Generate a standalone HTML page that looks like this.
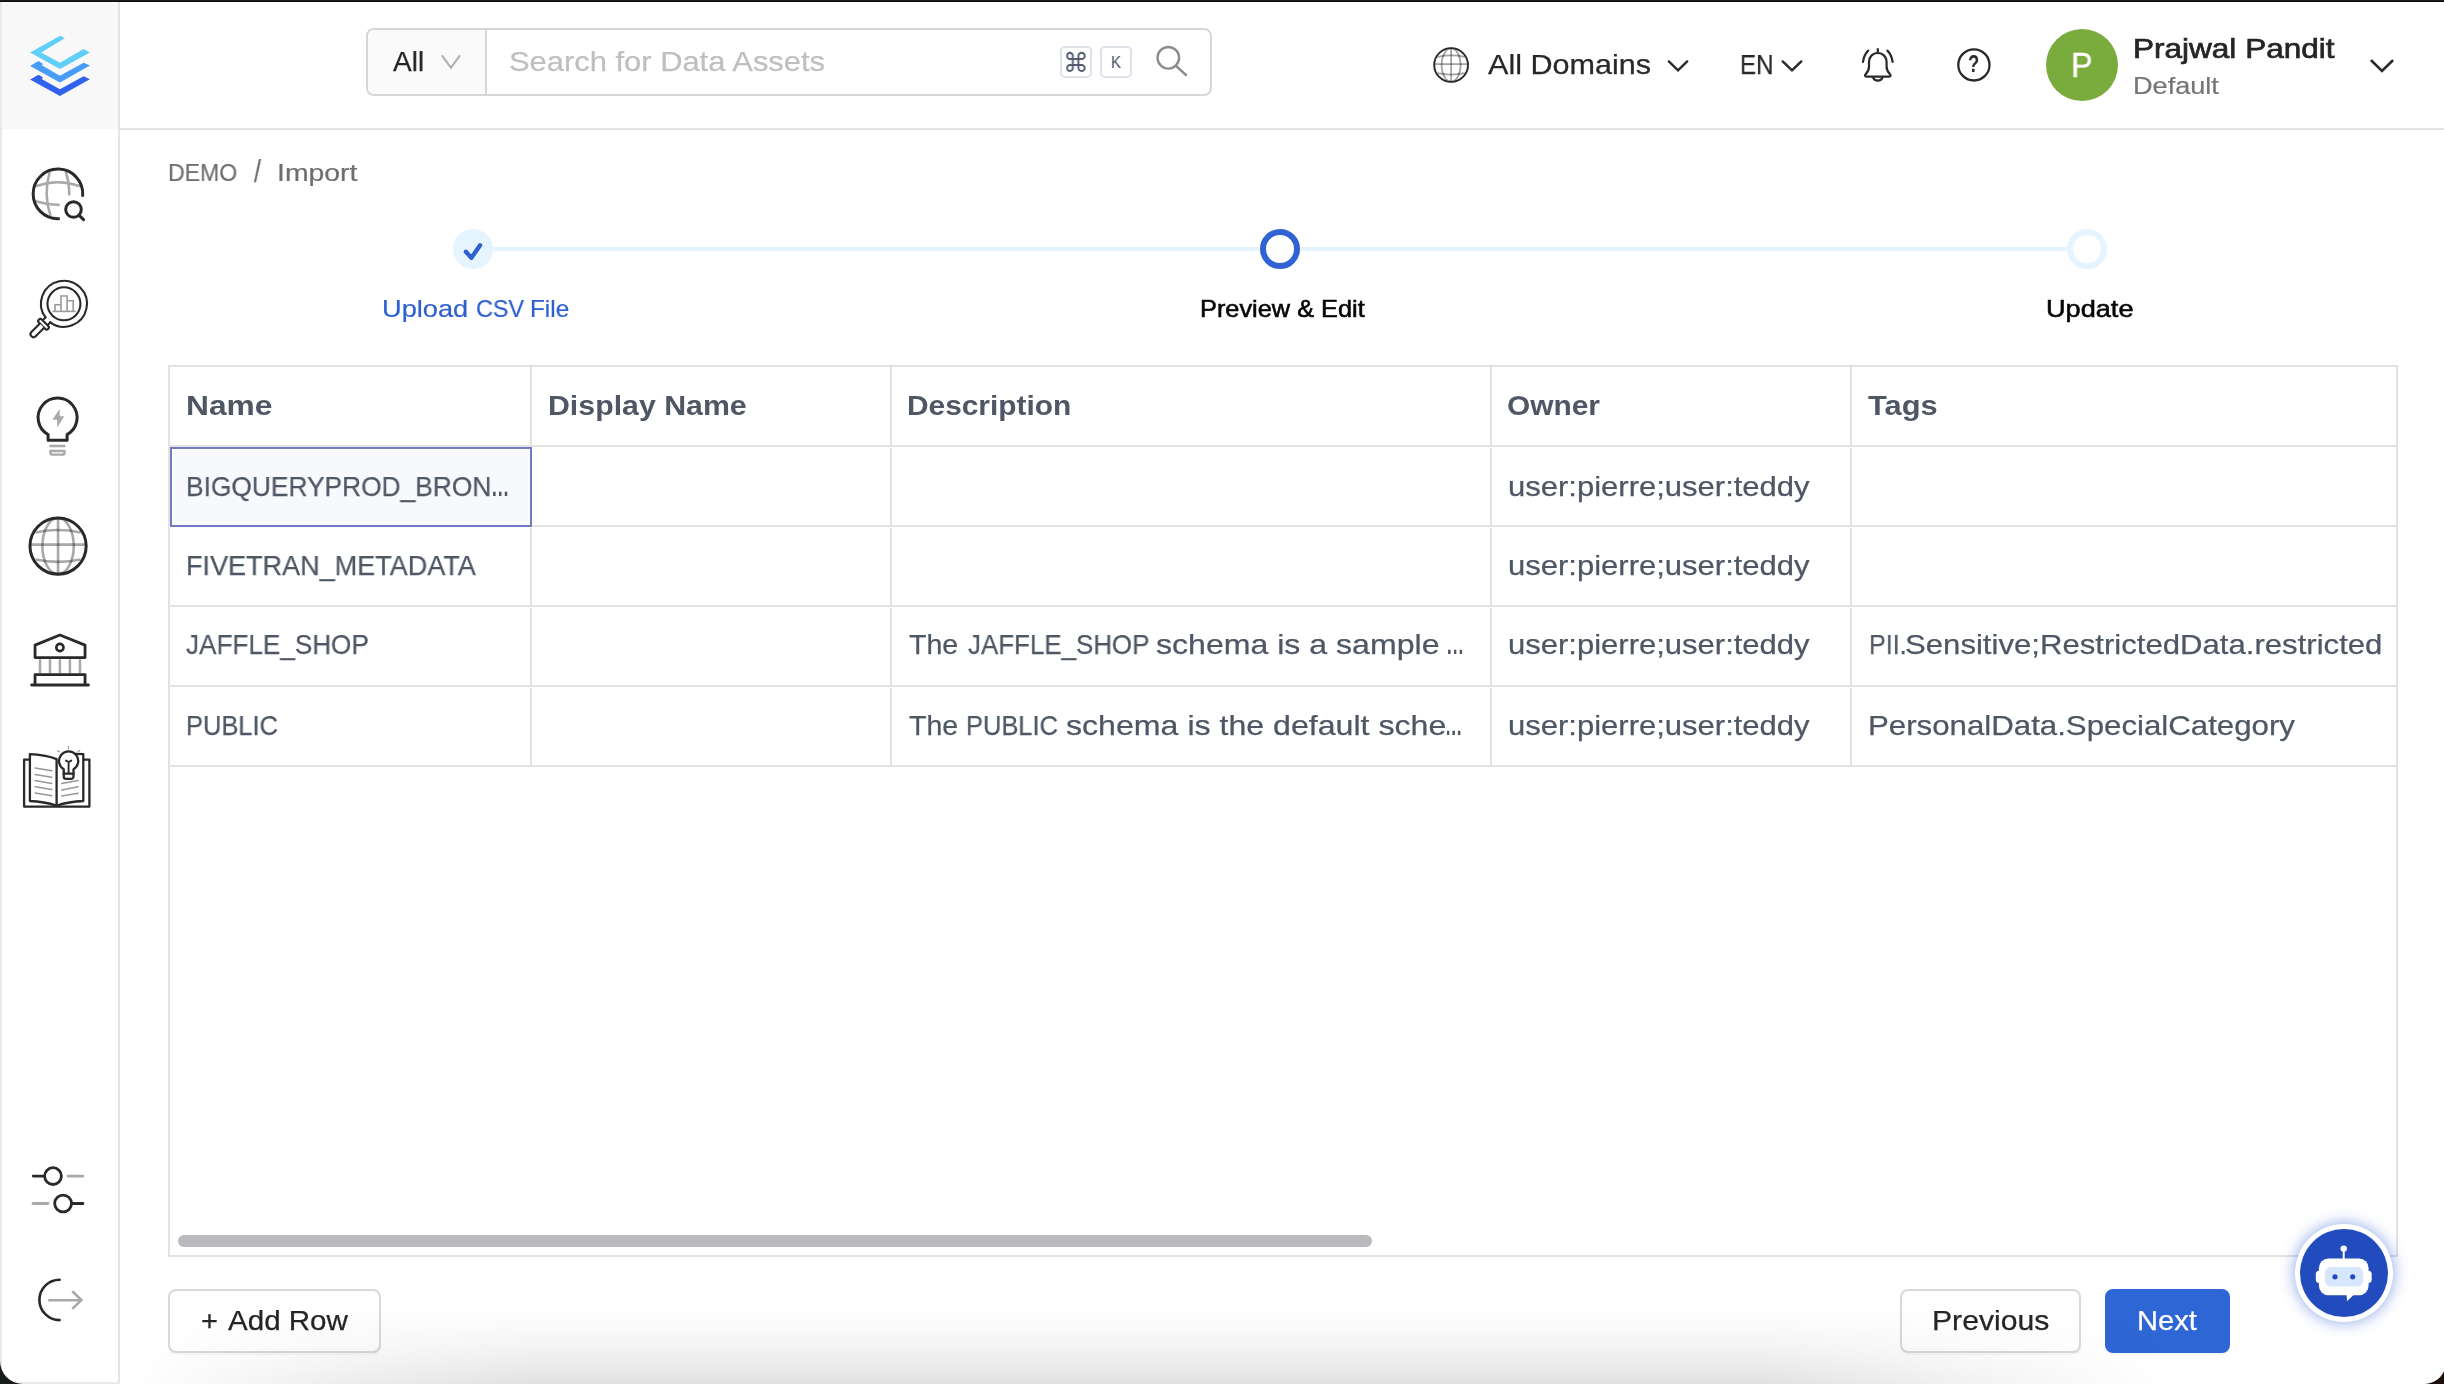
<!DOCTYPE html>
<html lang="en">
<head>
<meta charset="utf-8">
<title>Import - DEMO</title>
<style>
html,body{margin:0;padding:0;background:#fff;}
body{width:2444px;height:1384px;overflow:hidden;font-family:"Liberation Sans",sans-serif;}
#app{position:relative;width:2444px;height:1384px;overflow:hidden;background:#fff;}
.abs{position:absolute;}
.t{position:absolute;will-change:transform;white-space:pre;line-height:1;transform-origin:0 50%;display:inline-block;}
svg{position:absolute;overflow:visible;}
.dk{stroke:#292929;fill:none;stroke-linecap:round;stroke-linejoin:round;}
.gy{stroke:#a9a9a9;fill:none;stroke-linecap:round;stroke-linejoin:round;}
.hl{position:absolute;left:170px;width:2226px;height:2px;background:#e3e2e0;}
.vl{position:absolute;width:2px;background:#e3e2e0;}
.btn{position:absolute;box-sizing:border-box;border:2px solid #d9d9d9;border-radius:8px;background:#fff;box-shadow:0 2px 0 rgba(0,0,0,.03);}
</style>
</head>
<body>
<div id="app">


<!-- ============ SIDEBAR ============ -->
<nav id="sidebar" class="abs" style="left:0;top:0;width:120px;height:1384px;">
  <div class="abs" style="left:2px;top:3px;width:116px;height:126px;background:#f8f8f8;"></div>
  <div class="abs" style="left:2px;top:129px;width:116px;height:1255px;background:#fff;"></div>
  <div class="abs" style="left:118px;top:2px;width:2px;height:1382px;background:#e4e4e4;"></div>
  <svg id="sideicons" style="left:0;top:0" width="120" height="1384" viewBox="0 0 120 1384">
        <!-- logo -->
    <g id="logo">
      <polygon fill="#5fcff9" points="60.2,35.8 64.8,38.3 41.1,52.6 59.9,62.7 83.6,49.1 89.9,52.5 59.9,69.1 30.1,52.5"/>
      <polygon fill="#479cf7" points="30.1,65.9 38.5,61.1 43.1,63.9 41.7,65.3 59.9,75.7 83.6,62.7 89.9,65.6 59.9,82.4"/>
      <polygon fill="#2f62ee" points="30.1,79.5 38.5,74.8 43.1,77.5 41.7,78.9 59.9,89.3 83.6,76.3 89.9,79.2 59.9,95.9"/>
    </g>
    <!-- explore -->
    <g id="ic-explore">
      <g class="gy" stroke-width="2.6">
        <path d="M49.5 172.5 Q43.3 194 50.4 215.3"/>
        <path d="M66 172.5 Q69.5 184 69.2 194.5"/>
        <path d="M36.5 186.1 Q57.9 178.5 79.3 186.1"/>
        <path d="M36.5 201.4 Q47 204.5 58.5 204.9"/>
      </g>
      <g class="dk" stroke-width="3">
        <path d="M82.7 195.5 A24.8 24.8 0 1 0 58.5 218.7"/>
        <circle cx="73.5" cy="209.5" r="7.8"/>
        <path d="M79.4 215.6 L83.6 219.6"/>
      </g>
    </g>
    <!-- insights -->
    <g id="ic-insights">
      <g stroke="#9a9a9a" stroke-width="1.6" fill="none">
        <path d="M52.4 311.4 H75.8"/>
        <path d="M55 311.4 V304.7 H61"/>
        <path d="M61 311.4 V296 H67.1 V311.4"/>
        <path d="M67.1 300.7 H73.2 V311.4"/>
      </g>
      <g class="dk" stroke-width="2.1">
        <path d="M45.46 317.48 A23 23 0 1 1 50.27 322.29"/>
        <circle cx="63.95" cy="303.8" r="16.5"/>
        <g transform="translate(63.95 303.8) rotate(135)">
          <path d="M22.6 -3.4 L26.8 -3.4 M22.6 3.4 L26.8 3.4" />
          <rect x="26.8" y="-6.6" width="4.2" height="13.2" rx="2" fill="#fff"/>
          <path d="M31 -3 H43 A3 3 0 0 1 43 3 H31" fill="#fff"/>
        </g>
      </g>
    </g>
    <!-- bulb -->
    <g id="ic-bulb">
      <polygon fill="#a9a9a9" points="59.6,409.1 52.4,419.8 57,419.8 57.3,427.6 64.2,416.3 59.7,416.3"/>
      <path class="dk" stroke-width="3" d="M48.1 440.3 V434.6 A19.5 19.5 0 1 1 67.1 434.6 V440.3 Z"/>
      <g class="gy" stroke-width="2.3">
        <path d="M50.3 446 H64.6"/>
        <path d="M50.3 451 H64.6 V452.4 a2.2 2.2 0 0 1 -2.2 2.2 H52.5 a2.2 2.2 0 0 1 -2.2 -2.2 Z"/>
      </g>
    </g>
    <!-- domain globe -->
    <g id="ic-domain">
      <g stroke="rgba(0,0,0,.34)" stroke-width="2.6" fill="none">
        <path d="M58.06 518 V574"/>
        <path d="M30 544.6 H86.1"/>
        <ellipse cx="58.06" cy="546.06" rx="15.7" ry="28"/>
        <path d="M35.5 532.5 Q58.06 527.6 80.6 532.5"/>
        <path d="M35.5 559.6 Q58.06 564.2 80.6 559.6"/>
      </g>
      <circle class="dk" stroke-width="3" cx="58.06" cy="546.06" r="28.1"/>
    </g>
    <!-- governance -->
    <g id="ic-govern">
      <g stroke="#a9a9a9" stroke-width="2.5" fill="none">
        <path d="M40 659.3 V673.2 M50 659.3 V673.2 M59.9 659.3 V673.2 M69.9 659.3 V673.2 M80 659.3 V673.2"/>
      </g>
      <g class="dk" stroke-width="2.8">
        <path d="M59.9 635 L85.05 645.1 V657.6 H35.05 V645.1 Z"/>
        <circle cx="59.9" cy="647.5" r="3.6" stroke-width="2.6"/>
        <path d="M35.05 684.7 V674.6 H85.05 V684.7"/>
        <path d="M31.6 685 H88.5"/>
      </g>
    </g>
    <!-- knowledge book -->
    <g id="ic-book">
      <g class="dk" stroke-width="2.3">
        <path d="M29.6 759.7 H24.1 V806.6 H89.4 V759.7 H83.9"/>
        <path d="M29.9 754.2 Q44.5 754.6 56.6 759.1 V805.6 Q44 801.5 29.9 801 Z" fill="#fff"/>
        <path d="M56.6 805.6 Q69 801.5 83.3 801 V754.2 L76 753.9" fill="none"/>
      </g>
      <g stroke="#979797" stroke-width="1.5" fill="none" stroke-linecap="round">
        <path d="M35.1 767.9 L51.7 770.8 M35.1 774.4 L51.7 777.3 M35.1 780.5 L51.7 783.5 M35.1 786.7 L51.7 789.6 M35.1 792.9 L51.7 795.8"/>
        <path d="M61.8 783.5 L78 780.5 M61.8 790 L78 786.7 M61.8 796.1 L78 793.2"/>
        <path d="M57.6 750.8 L59.2 751.8 M68.5 746.6 V748.6 M79.8 750.6 L78.2 751.6" stroke-width="1.2"/>
      </g>
      <g class="dk" stroke-width="2.3">
        <path d="M63.75 774 V769.3 A9.6 9.6 0 1 1 73.5 769.3 V774" fill="#fff"/>
        <path d="M63.75 773.7 H73.5 V776.5 a2.4 2.4 0 0 1 -2.4 2.4 H66.15 a2.4 2.4 0 0 1 -2.4 -2.4 Z" fill="#fff"/>
        <path d="M68.6 773 V762 M66 760.6 L68.6 762 L71.2 760.6" stroke-width="1.9"/>
      </g>
    </g>
    <!-- settings -->
    <g id="ic-settings" stroke-width="2.8">
      <path class="dk" d="M33.2 1176.1 H44.4"/>
      <circle class="dk" cx="53" cy="1176.1" r="8.4"/>
      <path class="gy" d="M68 1176.1 H83"/>
      <path class="gy" d="M33 1203.5 H48"/>
      <circle class="dk" cx="63.1" cy="1203.5" r="8.4"/>
      <path class="dk" d="M71.6 1203.5 H82.9"/>
    </g>
    <!-- logout -->
    <g id="ic-logout" stroke-width="2.6">
      <path class="dk" d="M59.6 1279.7 A20.2 20.2 0 0 0 59.6 1320.1"/>
      <path d="M48.3 1300.3 H80.5 M72.3 1291.2 L81.4 1300.1 L72.3 1308.9" stroke="#a9a9a9" fill="none" stroke-linejoin="miter"/>
    </g>

  </svg>
</nav>

<!-- ============ HEADER ============ -->
<header id="topnav">
<div class="abs" style="left:120px;top:3px;width:2324px;height:125px;background:#fff;border-bottom:2px solid #e4e4e4;"></div>
<div id="search" class="abs" style="left:366px;top:28px;width:846px;height:68px;box-sizing:border-box;border:2px solid #d6d6d6;border-radius:8px;background:#fff;overflow:hidden;">
  <div class="abs" style="left:0;top:0;width:117px;height:64px;background:#fafafa;border-right:2px solid #d6d6d6;"></div>
</div>
<div class="abs" style="left:1060px;top:46px;width:32px;height:32px;box-sizing:border-box;border:2px solid #dde2ea;border-radius:5px;"></div>
<div class="abs" style="left:1100px;top:46px;width:32px;height:32px;box-sizing:border-box;border:2px solid #dde2ea;border-radius:5px;"></div>
<div class="abs" style="left:2046px;top:29px;width:72px;height:72px;border-radius:50%;background:#7aab3d;"></div>
<svg id="headicons" style="left:0;top:0" width="2444" height="130" viewBox="0 0 2444 130">
    <!-- search type chevron -->
  <path d="M441.9 55.3 L450.9 67.7 L460 55.3" fill="none" stroke="#b0b0b0" stroke-width="2"/>
  <!-- search icon -->
  <g fill="none" stroke="#8c8c8c" stroke-width="2.4" stroke-linecap="round">
    <circle cx="1168.3" cy="57.8" r="10.8"/>
    <path d="M1176.2 66.1 L1186 75"/>
  </g>
  <!-- domain globe -->
  <g>
    <g stroke="rgba(0,0,0,.36)" stroke-width="1.7" fill="none">
      <path d="M1451.1 48.5 V81.5"/>
      <path d="M1434.5 64.1 H1467.7"/>
      <ellipse cx="1451.1" cy="65" rx="9.5" ry="16.6"/>
      <path d="M1437.5 56.8 Q1451.1 53.9 1464.7 56.8"/>
      <path d="M1437.5 73.2 Q1451.1 76 1464.7 73.2"/>
    </g>
    <circle cx="1451.1" cy="65" r="16.9" fill="none" stroke="#292929" stroke-width="1.9"/>
  </g>
  <!-- chevrons -->
  <g fill="none" stroke="#292929" stroke-width="2.4" stroke-linecap="round" stroke-linejoin="miter">
    <path d="M1668.8 61.4 L1678 70.4 L1687.2 61.4"/>
    <path d="M1782.7 61.4 L1792 70.4 L1801.3 61.4"/>
    <path d="M2371.6 60.8 L2382 70.9 L2392.4 60.8" stroke-width="2.6"/>
  </g>
  <!-- bell -->
  <g fill="none" stroke="#292929" stroke-width="2.2" stroke-linecap="round" stroke-linejoin="round">
    <path d="M1877.8 49 V52.8"/>
    <path d="M1877.8 53 C1872.5 53 1869 57 1869 62 V66.5 C1869 70.5 1867.3 72.6 1865.6 74.3 C1864.4 75.5 1865 76.6 1866.5 76.6 H1889.1 C1890.6 76.6 1891.2 75.5 1890 74.3 C1888.3 72.6 1886.6 70.5 1886.6 66.5 V62 C1886.6 57 1883.1 53 1877.8 53 Z"/>
    <path d="M1873.2 77.6 A4.8 4.2 0 0 0 1882.4 77.6"/>
    <path d="M1868.2 50.6 Q1863.8 55 1863 62"/>
    <path d="M1887.4 50.6 Q1891.8 55 1892.6 62"/>
  </g>
  <!-- help -->
  <circle cx="1973.9" cy="64.9" r="15.6" fill="none" stroke="#292929" stroke-width="2.3"/>

</svg>
<span class="t" id="t_all" style="left:393.30px;top:47.90px;font-size:28.0px;font-weight:400;color:#262626;transform:scaleX(0.9967);-webkit-text-stroke:0.25px #262626">All</span><span class="t" id="t_ph" style="left:509.00px;top:47.90px;font-size:28.0px;font-weight:400;color:#bfbfbf;transform:scaleX(1.1035);-webkit-text-stroke:0.25px #bfbfbf">Search for Data Assets</span><span class="t" id="t_cmd" style="left:1063.03px;top:50.10px;font-size:26.7px;font-weight:400;color:#545b70;transform:scaleX(0.9571);font-family:'DejaVu Sans',sans-serif">⌘</span><span class="t" id="t_k" style="left:1110.92px;top:54.21px;font-size:17px;font-weight:400;color:#545b70;transform:scaleX(0.8800);-webkit-text-stroke:0.2px #545b70">K</span><span class="t" id="t_dom" style="left:1488.30px;top:50.80px;font-size:28.0px;font-weight:400;color:#292929;transform:scaleX(1.0919);-webkit-text-stroke:0.25px #292929">All Domains</span><span class="t" id="t_en" style="left:1739.88px;top:50.80px;font-size:28.0px;font-weight:400;color:#292929;transform:scaleX(0.8600);-webkit-text-stroke:0.25px #292929">EN</span><span class="t" id="t_q" style="left:1968.42px;top:53.41px;font-size:23.5px;font-weight:700;color:#292929;transform:scaleX(0.7833);">?</span><span class="t" id="t_p" style="left:2071.25px;top:47.42px;font-size:35.3px;font-weight:400;color:#ffffff;transform:scaleX(0.9158);-webkit-text-stroke:0.4px #ffffff">P</span><span class="t" id="t_name" style="left:2133.35px;top:35.00px;font-size:28.0px;font-weight:400;color:#252525;transform:scaleX(1.1260);-webkit-text-stroke:0.7px #252525">Prajwal Pandit</span><span class="t" id="t_def" style="left:2133.14px;top:73.78px;font-size:24.0px;font-weight:400;color:#757575;transform:scaleX(1.1297);-webkit-text-stroke:0.2px #757575">Default</span>
</header>

<!-- ============ MAIN ============ -->
<main id="content">
  <div id="breadcrumb"><span class="t" id="t_demo" style="left:167.68px;top:161.18px;font-size:24.0px;font-weight:400;color:#6e6e6e;transform:scaleX(0.9623);-webkit-text-stroke:0.2px #6e6e6e">DEMO</span><span class="t" id="t_slash" style="left:253.70px;top:156.46px;font-size:31px;font-weight:400;color:#6e6e6e;transform:scaleX(0.8111);-webkit-text-stroke:0.25px #6e6e6e">/</span><span class="t" id="t_imp" style="left:277.24px;top:161.18px;font-size:24.0px;font-weight:400;color:#6e6e6e;transform:scaleX(1.1818);-webkit-text-stroke:0.2px #6e6e6e">Import</span></div>

  <div id="stepper">
    <div class="abs" style="left:493px;top:247px;width:767px;height:4px;background:#e6f4ff;"></div>
    <div class="abs" style="left:1300px;top:247px;width:767px;height:4px;background:#e6f4ff;"></div>
    <div class="abs" style="left:453px;top:229px;width:40px;height:40px;border-radius:50%;background:#e6f4ff;"></div>
    <div class="abs" style="left:1260px;top:229px;width:40px;height:40px;box-sizing:border-box;border-radius:50%;border:6px solid #3062d4;background:#fff;"></div>
    <div class="abs" style="left:2067px;top:229px;width:40px;height:40px;box-sizing:border-box;border-radius:50%;border:6px solid #e6f4ff;background:#fff;"></div>
    <svg style="left:453px;top:229px" width="40" height="40" viewBox="453 229 40 40"><path d="M465.9 251.7 L471.4 257.8 L480.1 245.2" fill="none" stroke="#2f60d0" stroke-width="4.3" stroke-linecap="round" stroke-linejoin="round"/></svg>
    <span class="t" id="t_s1a" style="left:382.23px;top:297.28px;font-size:24.0px;font-weight:400;color:#2f60d0;transform:scaleX(1.1342);-webkit-text-stroke:0.2px #2f60d0">Upload </span><span class="t" id="t_s1b" style="left:475.72px;top:297.28px;font-size:24.0px;font-weight:400;color:#2f60d0;transform:scaleX(0.9750);-webkit-text-stroke:0.2px #2f60d0">CSV </span><span class="t" id="t_s1c" style="left:530.47px;top:297.28px;font-size:24.0px;font-weight:400;color:#2f60d0;transform:scaleX(1.0139);-webkit-text-stroke:0.2px #2f60d0">File</span><span class="t" id="t_s2" style="left:1199.59px;top:297.28px;font-size:24.0px;font-weight:400;color:#050505;transform:scaleX(1.0555);-webkit-text-stroke:0.55px #050505">Preview &amp; Edit</span><span class="t" id="t_s3" style="left:2046.07px;top:297.28px;font-size:24.0px;font-weight:400;color:#050505;transform:scaleX(1.1303);-webkit-text-stroke:0.55px #050505">Update</span>
  </div>

  <div id="grid" class="abs" style="left:168px;top:365px;width:2230px;height:892px;box-sizing:border-box;border:2px solid #e2e2e0;background:#fff;"></div>
  <!-- grid lines -->
  <div class="hl" style="top:445px"></div>
  <div class="hl" style="top:525px"></div>
  <div class="hl" style="top:605px"></div>
  <div class="hl" style="top:685px"></div>
  <div class="hl" style="top:765px"></div>
  <div class="vl" style="left:530px;top:367px;height:78px"></div>
  <div class="vl" style="left:530px;top:448px;height:77px"></div>
  <div class="vl" style="left:530px;top:528px;height:77px"></div>
  <div class="vl" style="left:530px;top:608px;height:77px"></div>
  <div class="vl" style="left:530px;top:688px;height:77px"></div>
  <div class="vl" style="left:890px;top:367px;height:78px"></div>
  <div class="vl" style="left:890px;top:448px;height:77px"></div>
  <div class="vl" style="left:890px;top:528px;height:77px"></div>
  <div class="vl" style="left:890px;top:608px;height:77px"></div>
  <div class="vl" style="left:890px;top:688px;height:77px"></div>
  <div class="vl" style="left:1490px;top:367px;height:78px"></div>
  <div class="vl" style="left:1490px;top:448px;height:77px"></div>
  <div class="vl" style="left:1490px;top:528px;height:77px"></div>
  <div class="vl" style="left:1490px;top:608px;height:77px"></div>
  <div class="vl" style="left:1490px;top:688px;height:77px"></div>
  <div class="vl" style="left:1850px;top:367px;height:78px"></div>
  <div class="vl" style="left:1850px;top:448px;height:77px"></div>
  <div class="vl" style="left:1850px;top:528px;height:77px"></div>
  <div class="vl" style="left:1850px;top:608px;height:77px"></div>
  <div class="vl" style="left:1850px;top:688px;height:77px"></div>
  <!-- selected cell -->
  <div class="abs" style="left:170px;top:447px;width:362px;height:80px;box-sizing:border-box;border:2px solid #6f7ac2;background:#fff;"><div style="position:absolute;left:1px;top:1px;right:1px;bottom:1px;background:#f8f9fd;"></div></div>
  <!-- scrollbar -->
  <div class="abs" style="left:178px;top:1235px;width:1194px;height:12px;border-radius:6px;background:#b9b9be;"></div>
  <div id="grid-content" role="grid" aria-label="CSV preview">
    <div role="row" class="grid-header"><span class="t" id="t_h1" style="left:186.23px;top:391.80px;font-size:28.0px;font-weight:700;color:#4f5765;transform:scaleX(1.1338);">Name</span><span class="t" id="t_h2" style="left:548.04px;top:391.80px;font-size:28.0px;font-weight:700;color:#4f5765;transform:scaleX(1.0818);">Display Name</span><span class="t" id="t_h3" style="left:906.67px;top:391.80px;font-size:28.0px;font-weight:700;color:#4f5765;transform:scaleX(1.0662);">Description</span><span class="t" id="t_h4" style="left:1507.13px;top:391.80px;font-size:28.0px;font-weight:700;color:#4f5765;transform:scaleX(1.0674);">Owner</span><span class="t" id="t_h5" style="left:1868.30px;top:391.80px;font-size:28.0px;font-weight:700;color:#4f5765;transform:scaleX(1.1016);">Tags</span></div>
    <div role="row"><span class="t" id="t_r1c1" style="left:186.32px;top:472.90px;font-size:28.0px;font-weight:400;color:#4f5765;transform:scaleX(0.9402);-webkit-text-stroke:0.25px #4f5765">BIGQUERYPROD_BRON</span><span class="t" id="t_r1c1e" style="left:490.94px;top:472.90px;font-size:28.0px;font-weight:700;color:#4f5765;transform:scaleX(0.6545);">…</span><span class="t" id="t_r1c4" style="left:1508.19px;top:472.90px;font-size:28.0px;font-weight:400;color:#4f5765;transform:scaleX(1.1074);-webkit-text-stroke:0.25px #4f5765">user:pierre;user:teddy</span></div>
    <div role="row"><span class="t" id="t_r2c1" style="left:185.57px;top:551.50px;font-size:28.0px;font-weight:400;color:#4f5765;transform:scaleX(0.9654);-webkit-text-stroke:0.25px #4f5765">FIVETRAN_METADATA</span><span class="t" id="t_r2c4" style="left:1508.19px;top:551.50px;font-size:28.0px;font-weight:400;color:#4f5765;transform:scaleX(1.1074);-webkit-text-stroke:0.25px #4f5765">user:pierre;user:teddy</span></div>
    <div role="row"><span class="t" id="t_r3c1" style="left:186.10px;top:631.30px;font-size:28.0px;font-weight:400;color:#4f5765;transform:scaleX(0.9323);-webkit-text-stroke:0.25px #4f5765">JAFFLE_SHOP</span><span class="t" id="t_r3c3a" style="left:909.00px;top:631.30px;font-size:28.0px;font-weight:400;color:#4f5765;transform:scaleX(1.0191);-webkit-text-stroke:0.25px #4f5765">The </span><span class="t" id="t_r3c3b" style="left:967.60px;top:631.30px;font-size:28.0px;font-weight:400;color:#4f5765;transform:scaleX(0.9251);-webkit-text-stroke:0.25px #4f5765">JAFFLE_SHOP </span><span class="t" id="t_r3c3c" style="left:1156.35px;top:631.30px;font-size:28.0px;font-weight:400;color:#4f5765;transform:scaleX(1.1457);-webkit-text-stroke:0.25px #4f5765">schema is a sample </span><span class="t" id="t_r3c3d" style="left:1445.75px;top:631.30px;font-size:28.0px;font-weight:700;color:#4f5765;transform:scaleX(0.6500);">…</span><span class="t" id="t_r3c4" style="left:1508.19px;top:631.30px;font-size:28.0px;font-weight:400;color:#4f5765;transform:scaleX(1.1074);-webkit-text-stroke:0.25px #4f5765">user:pierre;user:teddy</span><span class="t" id="t_r3c5a" style="left:1868.71px;top:631.30px;font-size:28.0px;font-weight:400;color:#4f5765;transform:scaleX(0.8947);-webkit-text-stroke:0.25px #4f5765">PII.</span><span class="t" id="t_r3c5b" style="left:1904.79px;top:631.30px;font-size:28.0px;font-weight:400;color:#4f5765;transform:scaleX(1.1115);-webkit-text-stroke:0.25px #4f5765">Sensitive;RestrictedData.restricted</span></div>
    <div role="row"><span class="t" id="t_r4c1" style="left:185.68px;top:711.50px;font-size:28.0px;font-weight:400;color:#4f5765;transform:scaleX(0.9082);-webkit-text-stroke:0.25px #4f5765">PUBLIC</span><span class="t" id="t_r4c3a" style="left:909.00px;top:711.50px;font-size:28.0px;font-weight:400;color:#4f5765;transform:scaleX(1.0191);-webkit-text-stroke:0.25px #4f5765">The </span><span class="t" id="t_r4c3b" style="left:965.78px;top:711.50px;font-size:28.0px;font-weight:400;color:#4f5765;transform:scaleX(0.9082);-webkit-text-stroke:0.25px #4f5765">PUBLIC </span><span class="t" id="t_r4c3c" style="left:1066.15px;top:711.50px;font-size:28.0px;font-weight:400;color:#4f5765;transform:scaleX(1.1470);-webkit-text-stroke:0.25px #4f5765">schema is the default sche</span><span class="t" id="t_r4c3d" style="left:1444.65px;top:711.50px;font-size:28.0px;font-weight:700;color:#4f5765;transform:scaleX(0.6182);">…</span><span class="t" id="t_r4c4" style="left:1508.19px;top:711.50px;font-size:28.0px;font-weight:400;color:#4f5765;transform:scaleX(1.1074);-webkit-text-stroke:0.25px #4f5765">user:pierre;user:teddy</span><span class="t" id="t_r4c5" style="left:1868.27px;top:711.50px;font-size:28.0px;font-weight:400;color:#4f5765;transform:scaleX(1.1150);-webkit-text-stroke:0.25px #4f5765">PersonalData.SpecialCategory</span></div>
  </div>

  <div id="actions">
  <div class="btn" style="left:168px;top:1289px;width:213px;height:64px;"></div>
  <div class="btn" style="left:1900px;top:1289px;width:181px;height:64px;"></div>
  <div class="btn" style="left:2105px;top:1289px;width:125px;height:64px;background:#2f66d6;border-color:#2f66d6;"></div>
  <span class="t" id="t_plus" style="left:201.16px;top:1307.10px;font-size:28.0px;font-weight:400;color:#262626;transform:scaleX(1.0357);-webkit-text-stroke:0.25px #262626">+ </span><span class="t" id="t_add" style="left:227.80px;top:1307.10px;font-size:28.0px;font-weight:400;color:#262626;transform:scaleX(1.0553);-webkit-text-stroke:0.25px #262626">Add Row</span><span class="t" id="t_prev" style="left:1932.25px;top:1307.10px;font-size:28.0px;font-weight:400;color:#262626;transform:scaleX(1.0764);-webkit-text-stroke:0.25px #262626">Previous</span><span class="t" id="t_next" style="left:2137.42px;top:1307.10px;font-size:28.0px;font-weight:400;color:#ffffff;transform:scaleX(1.0393);-webkit-text-stroke:0.25px #ffffff">Next</span>
  </div>
</main>

<!-- chat bot -->
<div class="abs" style="left:2294.5px;top:1224px;width:98px;height:98px;border-radius:50%;background:#fff;box-shadow:0 0 14px 2px rgba(47,98,214,.45);"></div>
<div class="abs" style="left:2299.5px;top:1229px;width:88px;height:88px;border-radius:50%;background:#224bbd;"></div>
<svg id="bot" style="left:2294px;top:1224px" width="100" height="100" viewBox="2294 1224 100 100">
    <g fill="#fff">
    <circle cx="2343.7" cy="1248.6" r="3.2"/>
    <rect x="2342.7" y="1250" width="2" height="9"/>
    <rect x="2315.8" y="1270.7" width="55.9" height="12.3" rx="3.5"/>
    <rect x="2318.9" y="1258.4" width="49.7" height="36.9" rx="9.5"/>
    <polygon points="2346.6,1294.8 2353.8,1294.8 2347,1301.3"/>
  </g>
  <rect x="2324.9" y="1267.1" width="38.3" height="19.5" rx="6" fill="#d5e6fd"/>
  <circle cx="2335" cy="1276.8" r="2.6" fill="#224bbd"/>
  <circle cx="2352.7" cy="1276.8" r="2.6" fill="#224bbd"/>

</svg>

<!-- bottom window shadow -->
<div class="abs" style="left:120px;top:1306px;width:2324px;height:78px;background:linear-gradient(to top, rgba(0,0,0,.116) 0%, rgba(0,0,0,.075) 27%, rgba(0,0,0,.04) 53%, rgba(0,0,0,.014) 80%, rgba(0,0,0,0) 100%);-webkit-mask-image:linear-gradient(to right, transparent 10px, rgba(0,0,0,.5) 190px, #000 420px, #000 1640px, rgba(0,0,0,.45) 1840px, transparent 2050px);mask-image:linear-gradient(to right, transparent 10px, rgba(0,0,0,.5) 190px, #000 420px, #000 1640px, rgba(0,0,0,.45) 1840px, transparent 2050px);"></div>

<!-- window chrome -->
<div class="abs" style="left:0;top:0;width:2444px;height:2px;background:linear-gradient(to bottom,#1c1b20 0,#1c1b20 1px,#0a090e 1px,#0a090e 2px);"></div>
<div class="abs" style="left:0;top:2px;width:2px;height:1382px;background:#e9e9e9;"></div>
<div class="abs" style="left:0;top:1382px;width:120px;height:2px;background:#e9e9e9;"></div>
<svg style="left:0;top:1354px" width="30" height="30" viewBox="0 1354 30 30"><path d="M0 1361 V1384 H23 A23 23 0 0 1 0 1361 Z" fill="#161d1a"/></svg>
<svg style="left:2414px;top:1354px" width="30" height="30" viewBox="2414 1354 30 30"><path d="M2444 1371.2 A22 22 0 0 1 2424 1384 L2444 1384 Z" fill="#1a0f0a"/></svg>
</div>
</body>
</html>
